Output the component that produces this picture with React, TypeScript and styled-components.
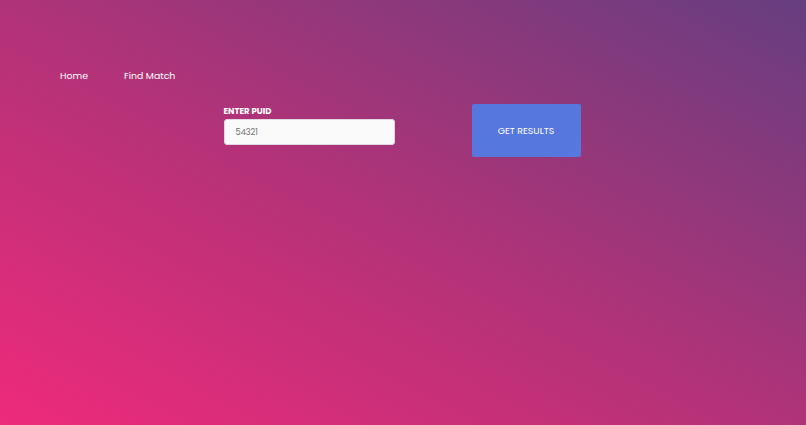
import React, { FC } from 'react';
import styled, { createGlobalStyle } from 'styled-components';

const GlobalStyle = createGlobalStyle`
  html, body {
    margin: 0;
    padding: 0;
    height: 100%;
  }
  body {
    font-family: Poppins, "Noto Sans", "Open Sans", sans-serif;
  }
  #root {
    height: 100%;
  }
`;

const App: FC = () => {
  return (
    <>
      <GlobalStyle />
      <Root>
        <Nav>
          <NavLink href="#">Home</NavLink>
          <NavLink href="#">Find Match</NavLink>
        </Nav>
        <Form>
          <Field>
            <Label htmlFor="puid">ENTER PUID</Label>
            <Input id="puid" defaultValue="54321" />
          </Field>
          <Button type="button">GET RESULTS</Button>
        </Form>
      </Root>
    </>
  );
};

export default App;

const Root = styled.div`
  width: 100%;
  height: 100%;
  min-height: 425px;
  box-sizing: border-box;
  background: linear-gradient(to top right, #ee2a7b 0%, #b03378 50%, #663e80 100%);
  display: flex;
  flex-direction: column;
`;

const Nav = styled.nav`
  display: flex;
  gap: 36px;
  padding: 67px 0 0 60px;
`;

const NavLink = styled.a`
  color: #fff;
  font-size: 9.4px;
  line-height: 18px;
  text-decoration: none;
`;

const Form = styled.div`
  display: flex;
  justify-content: center;
  align-items: flex-start;
  gap: 77px;
  margin-top: 19px;
  padding-right: 2px;
`;

const Field = styled.div`
  display: flex;
  flex-direction: column;
  gap: 2px;
  padding-top: 1px;
`;

const Label = styled.label`
  color: #fff;
  font-size: 8.5px;
  font-weight: 700;
  line-height: 12px;
`;

const Input = styled.input`
  width: 171px;
  height: 26px;
  box-sizing: border-box;
  border: 1px solid #e0d8e0;
  border-radius: 3px;
  background: #fafafa;
  padding: 0 11px;
  font-family: inherit;
  font-size: 8.2px;
  color: #707070;
  outline: none;
`;

const Button = styled.button`
  width: 109px;
  height: 53px;
  border: none;
  border-radius: 2px;
  background: #5677dd;
  color: #fff;
  font-family: inherit;
  font-size: 9.4px;
  font-weight: 400;
  cursor: pointer;
`;
